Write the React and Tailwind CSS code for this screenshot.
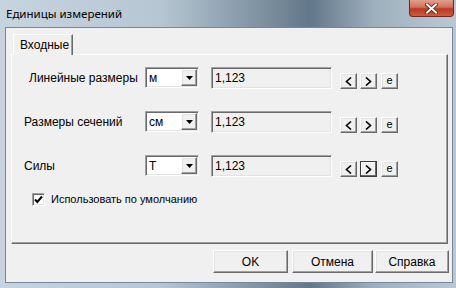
import React from "react";

const sunken =
    "border border-t-[#a0a0a0] border-l-[#a0a0a0] border-b-white border-r-white shadow-[inset_1px_1px_0_#696969,inset_-1px_-1px_0_#e3e3e3]";
const raised =
    "border border-t-white border-l-white border-b-[#696969] border-r-[#696969] shadow-[inset_-1px_-1px_0_#a0a0a0,inset_1px_1px_0_#e3e3e3] bg-[#f0f0f0]";

function Combo({ value }) {
    return (
        <div className={`w-[54px] h-[21px] bg-white flex items-center ${sunken}`}>
            <span className="flex-1 pl-[3px] text-[12px] leading-none text-black">{value}</span>
            <div className={`w-[16px] h-[17px] mr-[1px] flex items-center justify-center ${raised}`}>
                <svg width="7" height="4" viewBox="0 0 7 4">
                    <path d="M0 0h7L3.5 4z" fill="#000" />
                </svg>
            </div>
        </div>
    );
}

function SmallButton({ children, pressed }) {
    const border = pressed
        ? "border border-[#3c3c3c] shadow-[inset_-1px_-1px_0_#696969,inset_1px_1px_0_#ffffff] bg-[#f0f0f0]"
        : raised;
    return (
        <div className={`w-[17px] h-[16px] flex items-center justify-center ${border}`}>
            {children}
        </div>
    );
}

function UnitRow({ label, labelPad, unit, pressed }) {
    return (
        <div className="flex items-start h-[22px]">
            <div className={`w-[133px] h-[21px] flex items-center ${labelPad} text-[12px] text-black`}>{label}</div>
            <Combo value={unit} />
            <div className={`ml-[12px] w-[121px] h-[22px] flex items-center pl-[3px] text-[12px] text-black ${sunken}`}>
                1,123
            </div>
            <div className="ml-[8px] mt-[6px] flex gap-[3px]">
                <SmallButton>
                    <svg width="7" height="9" viewBox="0 0 7 9">
                        <path d="M6 0.5L1.5 4.5L6 8.5" stroke="#000" strokeWidth="1.6" fill="none" />
                    </svg>
                </SmallButton>
                <SmallButton pressed={pressed}>
                    <svg width="7" height="9" viewBox="0 0 7 9">
                        <path d="M1 0.5L5.5 4.5L1 8.5" stroke="#000" strokeWidth="1.6" fill="none" />
                    </svg>
                </SmallButton>
                <div className="ml-[1px]">
                    <SmallButton>
                        <span className="text-[11px] leading-none text-black -mt-[2px]">e</span>
                    </SmallButton>
                </div>
            </div>
        </div>
    );
}

function DialogButton({ children, width }) {
    return (
        <div className={`${width} h-[23px] flex items-center justify-center text-[12px] text-black ${raised}`}>
            {children}
        </div>
    );
}

export default function App() {
    return (
        <div
            className="w-[456px] h-[288px] overflow-hidden flex flex-col bg-[linear-gradient(90deg,#c6d4e0_0%,#b7c6d3_35%,#7c909f_58%,#62778a_68%,#9eb0bd_82%,#bac8d3_100%)]"
            style={{ fontFamily: '"Liberation Sans", Arial, sans-serif' }}
        >
            <div className="h-[27px] flex items-start justify-between">
                <div
                    className="pl-[6px] pt-[5px] text-[11.5px] text-black"
                    style={{ fontFamily: '"Noto Sans", "Open Sans", sans-serif' }}
                >
                    Единицы измерений
                </div>
                <div className="mr-[2px] w-[45px] h-[17px] rounded-b-[4px] border border-t-0 border-[#6b2a22] bg-[linear-gradient(180deg,#e0a08e_0%,#d2705a_45%,#b83a22_55%,#d05a3c_100%)] flex items-center justify-center">
                    <svg width="13" height="11" viewBox="0 0 13 11">
                        <path d="M2 1.5L11 9.5M11 1.5L2 9.5" stroke="#4a1a12" strokeWidth="3.6" strokeLinecap="square" />
                        <path d="M2 1.5L11 9.5M11 1.5L2 9.5" stroke="#ffffff" strokeWidth="2" strokeLinecap="square" />
                    </svg>
                </div>
            </div>

            <div className="ml-[5px] w-[448px] h-[256px] border border-[#73889a] bg-[#f0f0f0] flex flex-col">
                <div className="pl-[7px] pt-[6px] flex">
                    <div className="relative z-10 -mb-px h-[21px] w-[60px] bg-[#f0f0f0] border border-b-0 border-t-white border-l-white border-r-[#696969] shadow-[inset_-1px_0_0_#a0a0a0] flex items-center pl-[6px] text-[12px] text-black">
                        Входные
                    </div>
                </div>
                <div className="ml-[5px] w-[437px] h-[190px] border border-t-white border-l-white border-b-[#696969] border-r-[#696969] shadow-[inset_-1px_-1px_0_#a0a0a0] pt-[12px] flex flex-col gap-[22px]">
                    <UnitRow label="Линейные размеры" labelPad="pl-[17px]" unit="м" />
                    <UnitRow label="Размеры сечений" labelPad="pl-[12px]" unit="см" />
                    <div className="flex flex-col">
                        <UnitRow label="Силы" labelPad="pl-[12px]" unit="Т" pressed />
                        <div className="mt-[14px] pl-[20px] flex items-center gap-[6px] text-[11px] text-black">
                            <div className={`w-[13px] h-[13px] bg-white flex items-center justify-center ${sunken}`}>
                                <svg width="9" height="9" viewBox="0 0 9 9">
                                    <path d="M1 4.5L3.3 7L8 1.5" stroke="#000" strokeWidth="2" fill="none" />
                                </svg>
                            </div>
                            <span>Использовать по умолчанию</span>
                        </div>
                    </div>
                </div>
                <div className="mt-[6px] flex justify-end pr-[3px]">
                    <DialogButton width="w-[75px]">OK</DialogButton>
                    <div className="ml-[4px]">
                        <DialogButton width="w-[81px]">Отмена</DialogButton>
                    </div>
                    <div className="ml-[2px]">
                        <DialogButton width="w-[74px]">Справка</DialogButton>
                    </div>
                </div>
            </div>
        </div>
    );
}
